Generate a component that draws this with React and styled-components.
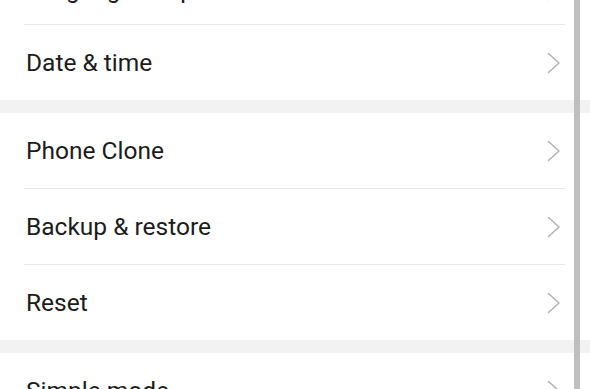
import React from "react";
import styled, { createGlobalStyle } from "styled-components";

const GlobalStyle = createGlobalStyle`
  html, body {
    margin: 0;
    padding: 0;
    background: #ffffff;
  }
  body {
    font-family: Roboto, "Noto Sans", "Liberation Sans", sans-serif;
  }
`;

const groups = [
  ["Language & input", "Date & time"],
  ["Phone Clone", "Backup & restore", "Reset"],
  ["Simple mode", "System update"],
];

const Chevron = () => (
  <svg width="14" height="22" viewBox="0 0 14 22" fill="none">
    <polyline
      points="1.5,1.5 12,11 1.5,20.5"
      stroke="#b4b4b4"
      strokeWidth="1.6"
      strokeLinecap="round"
      strokeLinejoin="round"
    />
  </svg>
);

const App = () => {
  return (
    <>
      <GlobalStyle />
      <Screen>
        <List>
          {groups.map((items, g) => (
            <Group key={g}>
              {items.map((label, i) => (
                <Row key={label}>
                  <RowInner divided={i > 0} shifted={g === 0 && i === 0}>
                    <Label>{label}</Label>
                    <Chevron />
                  </RowInner>
                </Row>
              ))}
            </Group>
          ))}
        </List>
        <ScrollBar />
      </Screen>
    </>
  );
};

export default App;

const Screen = styled.div`
  position: relative;
  width: 590px;
  height: 389px;
  overflow: hidden;
  background: #f2f2f2;
`;

const List = styled.div`
  display: flex;
  flex-direction: column;
  gap: 13px;
  margin-top: -51px;
`;

const Group = styled.div`
  background: #ffffff;
  display: flex;
  flex-direction: column;
`;

const Row = styled.div`
  display: flex;
  padding: 0 25px 0 24px;
`;

const RowInner = styled.div`
  flex: 1;
  display: flex;
  align-items: center;
  justify-content: space-between;
  box-sizing: border-box;
  height: ${(props) => (props.divided ? "76px" : "75px")};
  padding-left: 2px;
  padding-right: 4px;
  padding-top: ${(props) => (props.shifted ? "6px" : "0")};
  border-top: ${(props) => (props.divided ? "1px solid #e6e6e6" : "none")};
`;

const Label = styled.span`
  font-size: 24.5px;
  color: #1c1c1c;
`;

const ScrollBar = styled.div`
  position: absolute;
  top: 0;
  bottom: 0;
  right: 10px;
  width: 6px;
  background: #bfbfbf;
`;
